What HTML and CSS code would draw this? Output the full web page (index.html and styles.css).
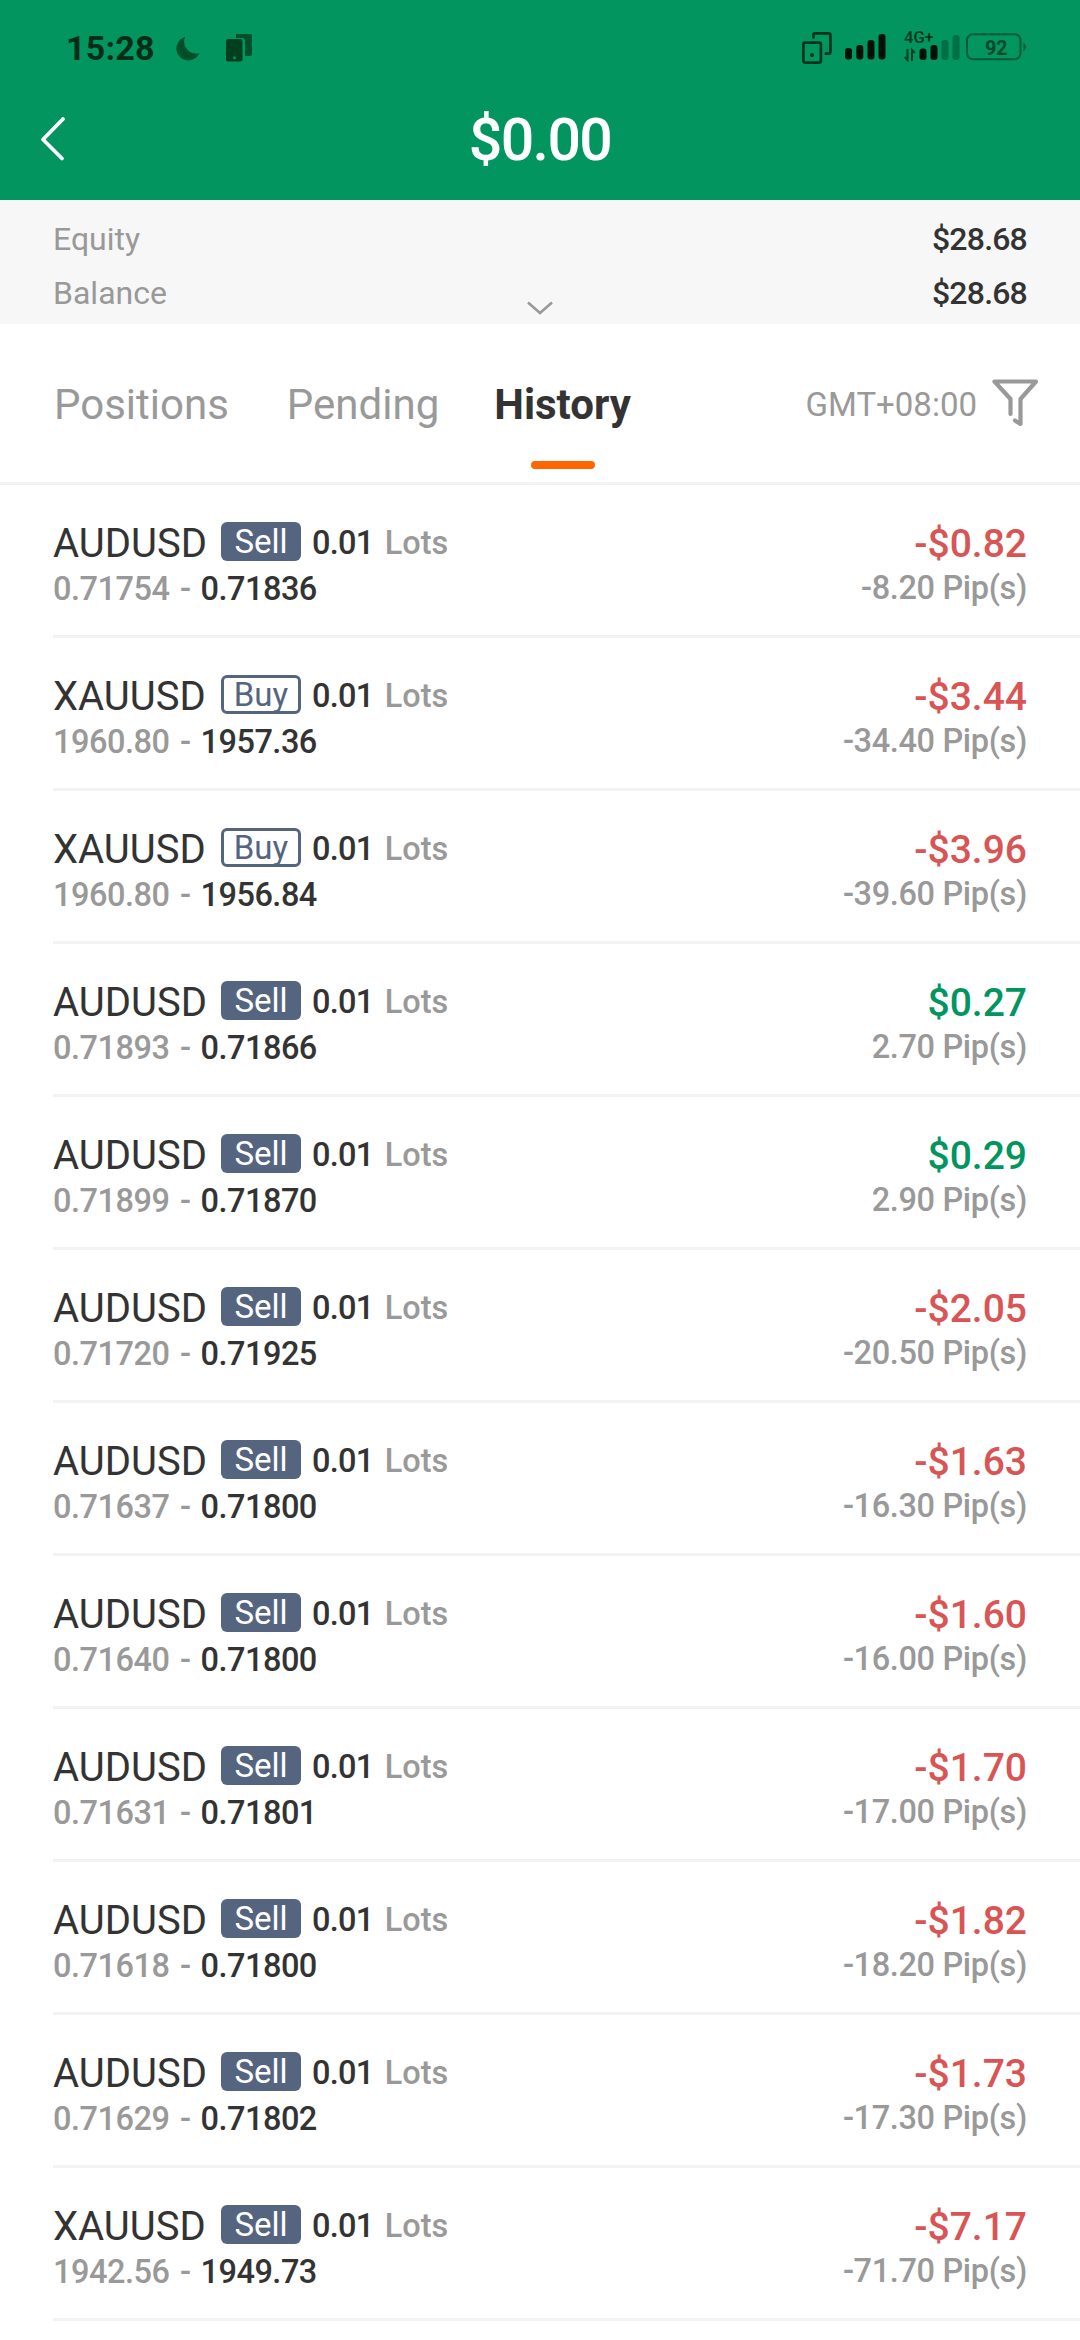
FILE: index.html
```
<!DOCTYPE html>
<html lang="en">
<head>
<meta charset="utf-8">
<title>Trade history</title>
<link rel="stylesheet" href="styles.css">
</head>
<body>
<header class="header">
  <div class="status">
    <span class="clock">15:28</span>
    <svg class="moon" width="24" height="26" viewBox="0 0 24 26"><path d="M9 1A12 12 0 1 0 23.500 17A12 12 0 0 1 9 1Z" fill="#004f2b"/></svg>
    <svg class="phones" width="26" height="29" viewBox="0 0 26 29"><path d="M10 1h14q2 0 2 2v18q0 2-2 2h-5V8q0-3-3-3h-6Z" fill="#00502b"/><rect x="0" y="6" width="16.500" height="22.500" rx="2" fill="#003f20"/><circle cx="8.500" cy="24.800" r="1.500" fill="#04935d"/></svg>
    <span class="grow"></span>
    <svg class="mirror" width="30" height="32" viewBox="0 0 30 32" fill="none" stroke="#00351b" stroke-width="2.700"><rect x="1.400" y="10.600" width="17.500" height="20" rx="2"/><path d="M11.400 6.500V3q0-1.600 1.600-1.600h13.800q1.600 0 1.600 1.600v17q0 1.600-1.600 1.600h-4"/><circle cx="10" cy="23" r="2" fill="#00351b" stroke="none"/></svg>
    <svg class="signal" width="41" height="26" viewBox="0 0 41 26" fill="#001208"><rect x="0" y="14" width="7" height="11.500" rx="3"/><rect x="11.300" y="11" width="7" height="14.500" rx="3"/><rect x="22.500" y="6" width="7" height="19.500" rx="3"/><rect x="33.500" y="0" width="7" height="25.500" rx="3"/></svg>
    <div class="mobile">
      <span class="net">4G+</span>
      <svg width="56" height="30" viewBox="0 0 56 30"><g fill="#001208"><rect x="15.500" y="16.500" width="7" height="11.500" rx="3"/><rect x="26.500" y="13" width="7" height="15" rx="3"/></g><g fill="#006f43"><rect x="37.500" y="8" width="7" height="20" rx="3"/><rect x="48.500" y="3" width="7" height="25" rx="3"/></g><path d="M3.500 17v11l-3-3M8 29V18l3 3" fill="none" stroke="#003d20" stroke-width="2"/></svg>
    </div>
    <svg class="battery" width="61" height="28" viewBox="0 0 61 28"><rect x="1" y="1.200" width="53.500" height="25" rx="6" fill="none" stroke="#005a34" stroke-width="2"/><path d="M57.500 9.500q5 4.500 0 9Z" fill="#005a34"/><text x="30" y="21.500" text-anchor="middle" class="charge">92</text></svg>
  </div>
  <div class="titlebar">
    <svg class="back" width="26" height="46" viewBox="0 0 26 46"><path d="M23 3L3 23.500L22 42.500" fill="none" stroke="#fff" stroke-width="3.800" stroke-linecap="round" stroke-linejoin="round"/></svg>
    <h1 class="total">$0.00</h1>
  </div>
</header>
<section class="account">
  <div class="pair"><span>Equity</span><span class="value">$28.68</span></div>
  <div class="pair"><span>Balance</span><span class="value">$28.68</span></div>
  <svg class="expand" width="26" height="14" viewBox="0 0 26 14"><path d="M1 1.500L13 12L25 1.500" fill="none" stroke="#999" stroke-width="2.600"/></svg>
</section>
<nav class="tabs">
  <span class="tab">Positions</span>
  <span class="tab">Pending</span>
  <span class="tab active">History</span>
  <span class="zone">GMT+08:00</span>
  <svg class="filter" width="48" height="50" viewBox="0 0 48 50"><path d="M19.500 36V21L3.500 3.500H45L29.500 21V46L24 42.500" fill="none" stroke="#999" stroke-width="4.200" stroke-linecap="round" stroke-linejoin="round"/></svg>
</nav>
<main class="list">
  <div class="row"><div class="top"><span class="sym">AUDUSD</span><span class="side sell">Sell</span><span class="lots">0.01</span><span class="unit">Lots</span><span class="profit loss">-$0.82</span></div><div class="bottom"><span class="open">0.71754 -</span><span class="close">0.71836</span><span class="pips">-8.20 Pip(s)</span></div></div>
  <div class="row"><div class="top"><span class="sym">XAUUSD</span><span class="side buy">Buy</span><span class="lots">0.01</span><span class="unit">Lots</span><span class="profit loss">-$3.44</span></div><div class="bottom"><span class="open">1960.80 -</span><span class="close">1957.36</span><span class="pips">-34.40 Pip(s)</span></div></div>
  <div class="row"><div class="top"><span class="sym">XAUUSD</span><span class="side buy">Buy</span><span class="lots">0.01</span><span class="unit">Lots</span><span class="profit loss">-$3.96</span></div><div class="bottom"><span class="open">1960.80 -</span><span class="close">1956.84</span><span class="pips">-39.60 Pip(s)</span></div></div>
  <div class="row"><div class="top"><span class="sym">AUDUSD</span><span class="side sell">Sell</span><span class="lots">0.01</span><span class="unit">Lots</span><span class="profit gain">$0.27</span></div><div class="bottom"><span class="open">0.71893 -</span><span class="close">0.71866</span><span class="pips">2.70 Pip(s)</span></div></div>
  <div class="row"><div class="top"><span class="sym">AUDUSD</span><span class="side sell">Sell</span><span class="lots">0.01</span><span class="unit">Lots</span><span class="profit gain">$0.29</span></div><div class="bottom"><span class="open">0.71899 -</span><span class="close">0.71870</span><span class="pips">2.90 Pip(s)</span></div></div>
  <div class="row"><div class="top"><span class="sym">AUDUSD</span><span class="side sell">Sell</span><span class="lots">0.01</span><span class="unit">Lots</span><span class="profit loss">-$2.05</span></div><div class="bottom"><span class="open">0.71720 -</span><span class="close">0.71925</span><span class="pips">-20.50 Pip(s)</span></div></div>
  <div class="row"><div class="top"><span class="sym">AUDUSD</span><span class="side sell">Sell</span><span class="lots">0.01</span><span class="unit">Lots</span><span class="profit loss">-$1.63</span></div><div class="bottom"><span class="open">0.71637 -</span><span class="close">0.71800</span><span class="pips">-16.30 Pip(s)</span></div></div>
  <div class="row"><div class="top"><span class="sym">AUDUSD</span><span class="side sell">Sell</span><span class="lots">0.01</span><span class="unit">Lots</span><span class="profit loss">-$1.60</span></div><div class="bottom"><span class="open">0.71640 -</span><span class="close">0.71800</span><span class="pips">-16.00 Pip(s)</span></div></div>
  <div class="row"><div class="top"><span class="sym">AUDUSD</span><span class="side sell">Sell</span><span class="lots">0.01</span><span class="unit">Lots</span><span class="profit loss">-$1.70</span></div><div class="bottom"><span class="open">0.71631 -</span><span class="close">0.71801</span><span class="pips">-17.00 Pip(s)</span></div></div>
  <div class="row"><div class="top"><span class="sym">AUDUSD</span><span class="side sell">Sell</span><span class="lots">0.01</span><span class="unit">Lots</span><span class="profit loss">-$1.82</span></div><div class="bottom"><span class="open">0.71618 -</span><span class="close">0.71800</span><span class="pips">-18.20 Pip(s)</span></div></div>
  <div class="row"><div class="top"><span class="sym">AUDUSD</span><span class="side sell">Sell</span><span class="lots">0.01</span><span class="unit">Lots</span><span class="profit loss">-$1.73</span></div><div class="bottom"><span class="open">0.71629 -</span><span class="close">0.71802</span><span class="pips">-17.30 Pip(s)</span></div></div>
  <div class="row"><div class="top"><span class="sym">XAUUSD</span><span class="side sell">Sell</span><span class="lots">0.01</span><span class="unit">Lots</span><span class="profit loss">-$7.17</span></div><div class="bottom"><span class="open">1942.56 -</span><span class="close">1949.73</span><span class="pips">-71.70 Pip(s)</span></div></div>
</main>
</body>
</html>
```
FILE: styles.css
```
* { box-sizing: border-box; }
body {
  margin: 0;
  width: 1080px;
  height: 2340px;
  overflow: hidden;
  background: #fff;
  color: #333;
  font-family: Roboto, sans-serif;
}
svg { display: block; flex: none; }
span { white-space: nowrap; }

.header { height: 200px; background: #02955f; }
.status {
  display: flex;
  align-items: flex-start;
  height: 80px;
  padding: 0 53px 0 66px;
}
.clock {
  width: 110px;
  padding-top: 28px;
  font-size: 34px;
  line-height: 40px;
  font-weight: 700;
  letter-spacing: 0.2px;
  color: #002d16;
}
.moon { margin-top: 36px; }
.phones { margin: 33px 0 0 26px; }
.grow { flex: 1; }
.mirror { margin-top: 32px; }
.signal { margin: 34px 0 0 13px; }
.mobile { width: 56px; margin: 30px 0 0 18px; }
.net {
  display: block;
  height: 2px;
  font-size: 16.500px;
  line-height: 16px;
  font-weight: 500;
  color: #00381d;
}
.battery { margin: 33px 0 0 6px; }
.charge { font: 700 20px Roboto, sans-serif; letter-spacing: -0.5px; fill: #00482a; }

.titlebar {
  display: grid;
  grid-template-columns: 120px 1fr 120px;
  align-items: center;
  height: 118px;
}
.back { margin: -1px 0 0 40px; }
.total {
  margin: 2px 0 0;
  text-align: center;
  color: #fff;
  font-size: 59px;
  line-height: 70px;
  font-weight: 500;
  letter-spacing: -1.6px;
}

.account {
  position: relative;
  height: 124px;
  padding: 12px 53px 0;
  background: #f7f7f7;
  color: #999;
  font-size: 32px;
}
.pair {
  display: flex;
  justify-content: space-between;
  height: 54px;
  line-height: 54px;
}
.value { font-weight: 500; color: #333; letter-spacing: -0.8px; }
.expand { position: absolute; left: 527px; top: 101px; }

.tabs {
  display: flex;
  height: 161px;
  padding: 0 41px 0 54px;
  border-bottom: 3px solid #f3f3f3;
  font-size: 42px;
  line-height: 161px;
  color: #999;
}
.tab { margin-right: 58px; }
.active {
  display: flex;
  flex-direction: column;
  align-items: center;
  margin: 0 0 0 -3px;
  color: #333;
  font-weight: 700;
}
.active::after {
  content: "";
  width: 64px;
  height: 8px;
  margin-top: -24px;
  border-radius: 4px;
  background: #ff6600;
}
.zone { margin-left: auto; font-size: 33px; }
.filter { margin: 54px 0 0 14px; }

.row {
  height: 153px;
  margin-left: 53px;
  padding: 37px 53px 0 0;
  border-bottom: 3px solid #f3f3f3;
}
.top { display: flex; align-items: flex-start; height: 44px; }
.sym { width: 168px; font-size: 40px; line-height: 47px; margin-top: -2px; }
.side {
  display: flex;
  align-items: center;
  justify-content: center;
  width: 80px;
  height: 39px;
  border-radius: 6px;
  font-size: 33px;
  line-height: 36px;
}
.sell { background: #56657f; color: #fff; }
.buy { border: 3px solid #56657f; color: #56657f; }
.lots, .unit, .bottom { font-size: 32.500px; font-weight: 500; }
.lots { margin-left: 11px; line-height: 43px; letter-spacing: -0.700px; }
.unit { margin-left: 11px; line-height: 43px; color: #999; }
.profit { margin-left: auto; font-size: 39px; line-height: 45px; font-weight: 500; }
.loss { color: #d95555; }
.gain { color: #02955f; }
.bottom { display: flex; line-height: 46px; color: #999; letter-spacing: -0.5px; }
.open { word-spacing: 3px; }
.close { margin-left: 10px; color: #333; }
.pips { margin-left: auto; margin-top: -1px; letter-spacing: -0.35px; }
```
